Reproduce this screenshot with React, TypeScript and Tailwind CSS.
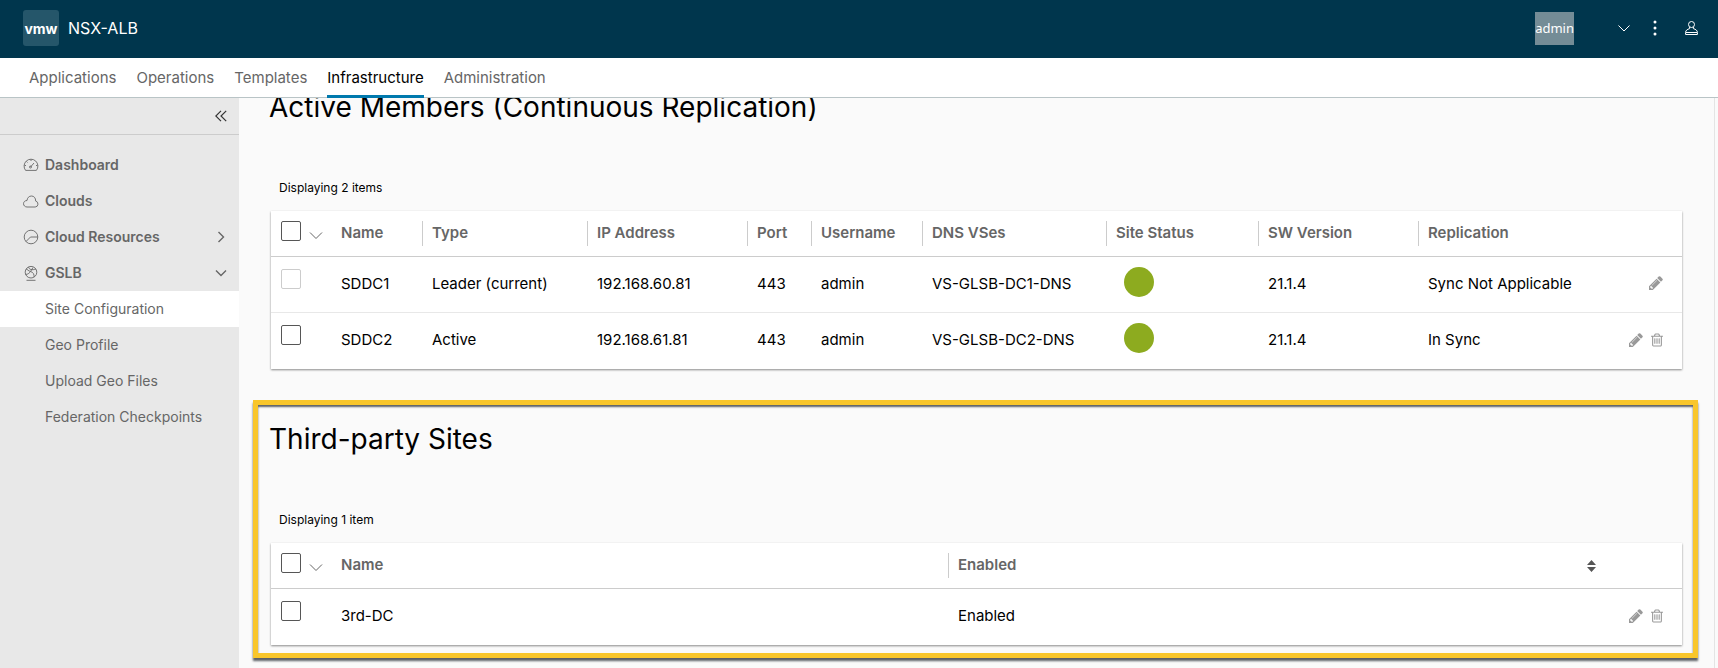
import type { ReactNode } from 'react';

interface ActiveMember {
  name: string;
  type: string;
  ip: string;
  port: number;
  username: string;
  dns: string;
  version: string;
  replication: string;
  leader?: boolean;
}

const members: ActiveMember[] = [
  {
    name: 'SDDC1',
    type: 'Leader (current)',
    ip: '192.168.60.81',
    port: 443,
    username: 'admin',
    dns: 'VS-GLSB-DC1-DNS',
    version: '21.1.4',
    replication: 'Sync Not Applicable',
    leader: true,
  },
  {
    name: 'SDDC2',
    type: 'Active',
    ip: '192.168.61.81',
    port: 443,
    username: 'admin',
    dns: 'VS-GLSB-DC2-DNS',
    version: '21.1.4',
    replication: 'In Sync',
  },
];

const thirdPartySites = [{ name: '3rd-DC', status: 'Enabled' }];

const tabs = ['Applications', 'Operations', 'Templates', 'Infrastructure', 'Administration'];

const gslbPages = ['Site Configuration', 'Geo Profile', 'Upload Geo Files', 'Federation Checkpoints'];

export default function App() {
  return (
    <div className="flex h-screen flex-col overflow-hidden bg-[#fafafa] font-[Inter,sans-serif] text-[14px] text-black">
      <Header />
      <TabBar />
      <div className="flex min-h-0 flex-1">
        <Sidebar />
        <main className="mr-[3px] min-w-0 flex-1 overflow-hidden border-r border-[#e4e4e4] pr-4 pl-[14px]">
          <section className="px-4">
            <h2 className="-mt-[7px] text-[28px] leading-8">Active Members (Continuous Replication)</h2>
            <Count>Displaying 2 items</Count>
            <MembersTable />
          </section>

          <section className="mt-[31px] border-[5px] border-[#f9c62b] px-[11px] pt-[18px] pb-2 shadow-[0_3px_2px_#5c6066,inset_0_2px_2px_#5c6066]">
            <h2 className="text-[28px] leading-8">Third-party Sites</h2>
            <Count>Displaying 1 item</Count>
            <SitesTable />
          </section>
        </main>
      </div>
    </div>
  );
}

function Header() {
  return (
    <header className="flex h-[58px] shrink-0 items-center bg-[#00364d] pr-5 pb-[2px] pl-[23px] text-white">
      <div className="flex h-9 w-9 items-center justify-center rounded-[3px] bg-[#25566a] text-[14px] font-bold">
        vmw
      </div>
      <span className="ml-[9px] text-[16px]">NSX-ALB</span>
      <div className="ml-auto flex items-center">
        <span className="bg-[#748c96] font-['Noto_Sans',sans-serif] text-[13px] leading-[33px]">admin</span>
        <button type="button" aria-label="Tenant" className="ml-[44px]">
          <svg className="h-3 w-3" viewBox="0 0 12 12" fill="none" stroke="currentColor">
            <path d="M0.500 3.500 6 9l5.500-5.500" />
          </svg>
        </button>
        <button type="button" aria-label="More" className="ml-[17px]">
          <svg className="h-4 w-4" viewBox="0 0 16 16" fill="currentColor">
            <circle cx="8" cy="2" r="1.500" />
            <circle cx="8" cy="8" r="1.500" />
            <circle cx="8" cy="14" r="1.500" />
          </svg>
        </button>
        <button type="button" aria-label="Account" className="ml-[22px]">
          <svg className="h-[14px] w-[13px]" viewBox="0 0 13 14" fill="none" stroke="currentColor">
            <circle cx="6.500" cy="3.500" r="3" />
            <path d="M4.600 6v1.600C2.200 8.300.6 9.600.6 11.300v2.200h11.800v-2.200c0-1.700-1.600-3-4-3.700V6M1 11.500h11" />
          </svg>
        </button>
      </div>
    </header>
  );
}

function TabBar() {
  return (
    <nav className="flex h-10 shrink-0 gap-5 border-b border-[#b9c4c6] bg-white pl-[29px] text-[15px]">
      {tabs.map((tab) => (
        <a
          key={tab}
          href="#"
          className={`-mb-px flex items-center border-b-[3px] pt-[3px] ${
            tab === 'Infrastructure' ? 'border-[#0079ad]' : 'border-transparent text-[#666]'
          }`}
        >
          {tab}
        </a>
      ))}
    </nav>
  );
}

function Sidebar() {
  return (
    <aside className="w-[239px] shrink-0 bg-[#e8e8e8] text-[#666]">
      <div className="flex h-[37px] items-center justify-end border-b border-[#ccc] pr-3">
        <button type="button" aria-label="Collapse menu" className="text-[#333]">
          <svg className="h-3 w-3" viewBox="0 0 12 12" fill="none" stroke="currentColor" strokeWidth="1.200">
            <path d="M6 .8.8 6 6 11.200M11.200.8 6 6l5.200 5.200" />
          </svg>
        </button>
      </div>
      <ul className="pt-3">
        <MenuItem label="Dashboard">
          <path d="M2.600 13.400h10.800a6.900 6.900 0 1 0-10.800 0ZM7.500 10l3.500-4M8 2.500V4M1.500 8.500H3M13 8.500h1.500M3.500 4.500l1 1" />
          <circle cx="7.500" cy="10" r="1" />
        </MenuItem>
        <MenuItem label="Clouds">
          <path d="M4 14h8.200a3 3 0 0 0 .5-5.900C12.700 5 11 3 8.500 3S4.300 4.800 4 7.500c-2 0-3.500 1.400-3.500 3.200S2 14 4 14Z" />
        </MenuItem>
        <MenuItem label="Cloud Resources" arrow="M3.500 1 8.500 6l-5 5">
          <circle cx="8" cy="8" r="6.800" />
          <path d="M3 12.500 7.500 8h7.300" />
        </MenuItem>
        <MenuItem label="GSLB" arrow="M1 3.500 6 8.500l5-5">
          <circle cx="8" cy="7.200" r="5.800" />
          <path d="M3.500 15.300h9M3 4c1.500 0 2 2 4.500 2.500s4 3 3.500 5.500M5.500 2C6 4.500 9 5.500 13 4M2.500 9.500C5 9.500 7 7.500 7.500 6.500L10 2.500" />
        </MenuItem>
        {gslbPages.map((page) => (
          <li key={page} className={page === 'Site Configuration' ? 'bg-white' : ''}>
            <a href="#" className="block pl-[45px] leading-9">
              {page}
            </a>
          </li>
        ))}
      </ul>
    </aside>
  );
}

function MenuItem({ label, arrow, children }: { label: string; arrow?: string; children: ReactNode }) {
  return (
    <li>
      <a href="#" className="flex h-9 items-center pr-3 pb-px pl-[23px] font-semibold">
        <svg className="mr-[6px] h-4 w-4" viewBox="0 0 16 16" fill="none" stroke="currentColor" strokeWidth="0.9">
          {children}
        </svg>
        {label}
        {arrow && (
          <svg className="ml-auto h-3 w-3" viewBox="0 0 12 12" fill="none" stroke="currentColor" strokeWidth="1.400">
            <path d={arrow} />
          </svg>
        )}
      </a>
    </li>
  );
}

function Count({ children }: { children: ReactNode }) {
  return <p className="mt-[57px] mb-[15px] pl-[10px] text-[12px] leading-4">{children}</p>;
}

function GridTable({ children }: { children: ReactNode }) {
  return (
    <div className="pl-0.5">
      <table className="w-full table-fixed border-separate border-spacing-0 bg-white text-left text-[15px] shadow-[0_1px_2px_rgba(0,0,0,0.45)]">
        {children}
      </table>
    </div>
  );
}

function MembersTable() {
  return (
    <GridTable>
      <thead>
        <tr>
          <SelectAllHead />
          <HeadCell width="w-[91px]" first>
            Name
          </HeadCell>
          <HeadCell width="w-[165px]">Type</HeadCell>
          <HeadCell width="w-[160px]">IP Address</HeadCell>
          <HeadCell width="w-[64px]">Port</HeadCell>
          <HeadCell width="w-[111px]">Username</HeadCell>
          <HeadCell width="w-[184px]">DNS VSes</HeadCell>
          <HeadCell width="w-[152px]">Site Status</HeadCell>
          <HeadCell width="w-[160px]">SW Version</HeadCell>
          <HeadCell>Replication</HeadCell>
          <th className="w-[72px] border-b border-[#ccc]" />
        </tr>
      </thead>
      <tbody className="[&>tr:not(:last-child)>td]:border-b">
        {members.map((m) => (
          <tr key={m.name}>
            <SelectCell name={m.name} disabled={m.leader} />
            <Cell>{m.name}</Cell>
            <Cell>{m.type}</Cell>
            <Cell>{m.ip}</Cell>
            <Cell>{m.port}</Cell>
            <Cell>{m.username}</Cell>
            <Cell>{m.dns}</Cell>
            <td className="h-14 border-[#e8e8e8] pt-[10px] pl-[18px] align-top">
              <div className="h-[30px] w-[30px] rounded-full bg-[#8dab1f]" />
            </td>
            <Cell>{m.version}</Cell>
            <Cell>{m.replication}</Cell>
            <ActionsCell canDelete={!m.leader} />
          </tr>
        ))}
      </tbody>
    </GridTable>
  );
}

function SitesTable() {
  return (
    <GridTable>
      <thead>
        <tr>
          <SelectAllHead />
          <HeadCell first>Name</HeadCell>
          <HeadCell width="w-[662px]">
            Enabled
            <button type="button" aria-label="Sort by Enabled" className="mr-[14px] ml-auto text-[#555]">
              <svg className="h-3 w-[9px]" viewBox="0 0 9 12" fill="currentColor">
                <path d="M4.500 0 9 5H0ZM4.500 12 0 7h9Z" />
              </svg>
            </button>
          </HeadCell>
          <th className="w-[72px] border-b border-[#ccc]" />
        </tr>
      </thead>
      <tbody>
        {thirdPartySites.map((site) => (
          <tr key={site.name}>
            <SelectCell name={site.name} />
            <Cell>{site.name}</Cell>
            <Cell>{site.status}</Cell>
            <ActionsCell canDelete />
          </tr>
        ))}
      </tbody>
    </GridTable>
  );
}

function HeadCell({ width = '', first, children }: { width?: string; first?: boolean; children: ReactNode }) {
  return (
    <th className={`h-[46px] border-b border-[#ccc] pt-[10px] align-top font-semibold text-[#666] ${width}`}>
      <div className={`flex h-[25px] items-center border-l pl-[9px] ${first ? 'border-transparent' : 'border-[#ccc]'}`}>
        {children}
      </div>
    </th>
  );
}

function SelectAllHead() {
  return (
    <th className="h-[46px] w-[60px] border-b border-[#ccc] pt-[10px] pl-[10px] align-top">
      <div className="flex">
        <Checkbox label="Select all" />
        <button type="button" aria-label="Selection options" className="mt-2 ml-2 text-[#666]">
          <svg className="h-3 w-[14px]" viewBox="0 0 14 12" fill="none" stroke="currentColor">
            <path d="M1 3.500 7 9.500l6-6" />
          </svg>
        </button>
      </div>
    </th>
  );
}

function SelectCell({ name, disabled }: { name: string; disabled?: boolean }) {
  return (
    <td className="h-14 border-[#e8e8e8] pt-3 pl-[10px] align-top">
      <Checkbox label={`Select ${name}`} disabled={disabled} />
    </td>
  );
}

function Checkbox({ label, disabled }: { label: string; disabled?: boolean }) {
  return (
    <input
      type="checkbox"
      aria-label={label}
      disabled={disabled}
      className="block h-5 w-5 appearance-none rounded-[2px] border border-[#565656] bg-white disabled:border-[#ccc]"
    />
  );
}

function Cell({ children }: { children: ReactNode }) {
  return <td className="h-14 border-[#e8e8e8] pb-px pl-[10px] whitespace-nowrap">{children}</td>;
}

function ActionsCell({ canDelete }: { canDelete?: boolean }) {
  return (
    <td className="h-14 border-[#e8e8e8] pr-[19px] pb-[3px]">
      <div className="flex justify-end gap-2 text-[#999]">
        <button type="button" aria-label="Edit">
          <svg className="h-[14px] w-[14px]" viewBox="0 0 1536 1536" fill="currentColor">
            <path d="M363 1408l91-91-235-235-91 91v107h128v128h107zM886 480q0-22-22-22-10 0-17 7l-542 542q-7 7-7 17 0 22 22 22 10 0 17-7l542-542q7-7 7-17zM832 288l416 416-832 832h-416v-416zM1515 384q0 53-37 90l-166 166-416-416 166-165q36-38 90-38 53 0 91 38l235 234q37 39 37 91z" />
          </svg>
        </button>
        {canDelete && (
          <button type="button" aria-label="Delete">
            <svg className="h-[14px] w-3" viewBox="0 0 1408 1536" fill="currentColor">
              <path d="M512 608v576q0 14-9 23t-23 9h-64q-14 0-23-9t-9-23v-576q0-14 9-23t23-9h64q14 0 23 9t9 23zM768 608v576q0 14-9 23t-23 9h-64q-14 0-23-9t-9-23v-576q0-14 9-23t23-9h64q14 0 23 9t9 23zM1024 608v576q0 14-9 23t-23 9h-64q-14 0-23-9t-9-23v-576q0-14 9-23t23-9h64q14 0 23 9t9 23zM1152 1332v-948h-896v948q0 22 7 40.500t14.500 27 10.500 8.500h832q3 0 10.500-8.500t14.500-27 7-40.500zM480 256h448l-48-117q-7-9-17-11h-317q-10 2-17 11zM1408 288v64q0 14-9 23t-23 9h-96v948q0 83-47 143.500t-113 60.500h-832q-66 0-113-58.500t-47-141.500v-952h-96q-14 0-23-9t-9-23v-64q0-14 9-23t23-9h309l70-167q15-37 54-63t79-26h320q40 0 79 26t54 63l70 167h309q14 0 23 9t9 23z" />
            </svg>
          </button>
        )}
      </div>
    </td>
  );
}
